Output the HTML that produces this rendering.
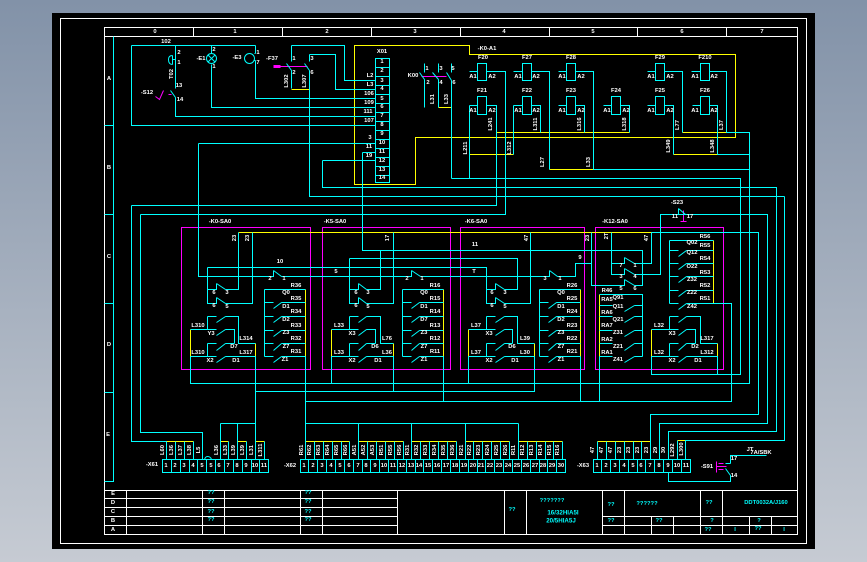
<!DOCTYPE html>
<html><head><meta charset="utf-8"><style>
html,body{margin:0;padding:0;width:867px;height:562px;overflow:hidden;background:linear-gradient(#8292a8,#c6cbd3)}
svg{position:absolute;left:0;top:0}
path,rect,circle{fill:none;stroke-width:1}
.w{stroke:#fff}.c{stroke:#0ff}.y{stroke:#ff0}.m{stroke:#f0f}
.l,.s{shape-rendering:crispEdges}
text{font-family:"Liberation Sans",sans-serif;font-weight:bold;font-size:5.8px;fill:#fff;text-anchor:middle;dominant-baseline:central}
.tc text{fill:#0ff}
</style></head><body>
<svg width="867" height="562" viewBox="0 0 867 562">
<rect x="52" y="13" width="763" height="536" fill="#000" style="fill:#000;stroke:none"/>
<g transform="translate(.5 .5)">
<path class="w s" d="M60 18H806V543H60ZM104 27H797V534H104ZM104 36H797M193 27V36M282 27V36M371 27V36M460 27V36M549 27V36M637 27V36M726 27V36"/>
<path class="w s" d="M104 490H797M104 498H397M104 507H397M104 516H397M104 525H397M126 490V534M202 490V534M224 490V534M300 490V534M322 490V534M397 490V534M504 490V534M526 490V534M602 490V534M624 490V534M700 490V534M722 490V534M602 516H797M602 525H797M651 516V534M673 516V534M749 516V534M771 516V534"/>
<path class="c s" d="M113 36V481H104M104 125H113M104 214H113M104 303H113M104 392H113"/>
<path class="m s" d="M181 227H310V369H181ZM322 227H450V369H322ZM460 227H584V369H460ZM595 227H723V369H595Z"/>
<path class="m s" d="M421 76H446M273 66H307M716 461V472M716 466H726M683 210V221M680 221H686M168 94H171"/>
<path class="m" d="M155 96L159 99L163 90M273 66h7" />
<path class="m s" d="M273 65h7M273 67h7M718 463h5M718 469h5"/>
<path class="y s" d="M354 45H469V54H735V137H415V184H354ZM291 89H309M438 107H451M496 132H629M682 132H726M469 154H513M673 154H717M549 169H593M238 232H651M190 329V356M255 343V356M331 329V356M393 343V356M468 329V356M534 343V356M651 329V356M717 343V356M305 289V356M443 289V356M580 289V356M599 294V356M713 240V303M166 441H193M220 441H228M237 441H246M255 441H264M305 441H349M358 441H403M411 441H456M465 441H509M518 441H562M597 441H650M677 440H685"/>
<path class="c s" d="M131 45H255M131 45V125H375M175 45V88M175 97V116H375M211 45V53M211 64V107H375M255 45V53M255 60V98H375M254 53h1M254 60h1M291 45H344V80H375M291 45V61M291 70V88M309 54H335V89H375M309 54V61M309 70V196H770M198 143H375M198 143V276H273V270M281 276H411V270M420 276H549V270M557 276H575V263H591M322 160H375M322 160V187H776V431H668V459M362 152H375M362 152V250H642V285H634M591 232V285H624V279M611 232V274H624V268M634 274H660V214H767V423H659V459M611 263H624V257M634 263H651V232M651 232H758V414H650V459M131 205V441H166M131 205H496V105H486M140 214H505V71H486M140 214V432H202V459M207 267H486V303H495V297M207 267V303H216V297M225 303H252V232M207 289H216V283M225 289H238V232M349 258H517V289H504M349 258V303H358V297M366 303H393V232M349 289H358V283M366 289H380V250M504 303H530V232M486 289H495V283"/>
<path class="c s" d="M207 316H216M225 316H238V343H255M207 316V329M190 329H216M225 329H234V343M207 343H216M225 343H234M207 343V356M190 356H216M225 356H255M190 356V383H749V132H726M255 356V459M255 391H534V356M349 316H358M366 316H380V343H393M349 316V329M331 329H358M366 329H375V343M349 343H358M366 343H375M349 343V356M331 356H358M366 356H393V391M331 356V383M486 316H495M504 316H517V343H534M486 316V329M468 329H495M504 329H512V343M486 343H495M504 343H512M486 343V356M468 356H495M504 356H534M468 356V383M669 316H678M686 316H700V343H717M669 316V329M651 329H678M686 329H695V343M669 343H678M686 343H695M669 343V356M651 356H678M686 356H717V374M651 356V374H740V178H451M717 154H749M593 169H749M678 214V208"/>
<path class="c s" d="M264 289V356M264 289H305M264 302H273M281 302H305M264 316H273M281 316H305M264 330H273M281 330H305M264 343H273M281 343H305M264 356H273M281 356H305M305 356V459M402 289V356M402 289H443M402 302H411M419 302H443M402 316H411M419 316H443M402 330H411M419 330H443M402 343H411M419 343H443M402 356H411M419 356H443M443 356V401M539 289V356M539 289H580M539 302H548M556 302H580M539 316H548M556 316H580M539 330H548M556 330H580M539 343H548M556 343H580M539 356H548M556 356H580M580 356V401M599 294H642V356M599 305H612M634 305H642M599 316H612M634 316H642M599 330H612M634 330H642M599 343H612M634 343H642M599 356H612M634 356H642M599 356V401M669 240H713M669 240V303M669 250H678M686 250H713M669 263H678M686 263H713M669 276H678M686 276H713M669 290H678M686 290H713M669 303H678M686 303H713M713 303H731V401H305"/>
<path class="c s" d="M469 71H477M513 71H522M531 71H549V169M558 71H566M575 71H593V169M647 71H655M664 71H682V132M691 71H700M709 71H726V132M469 105H477M513 105H522M531 105H540V132M558 105H566M575 105H584V132M603 105H611M620 105H629V132M647 105H655M664 105H673V154M692 105H700M709 105H717V154M469 105V178M513 105V154M424 63V72M424 79V107M438 63V72M438 79V107M451 63V72M451 80V178"/>
<path class="c s" d="M477 63h9v17h-9ZM522 63h9v17h-9ZM566 63h9v17h-9ZM655 63h9v17h-9ZM700 63h9v17h-9ZM477 96h9v18h-9ZM522 96h9v18h-9ZM566 96h9v18h-9ZM611 96h9v18h-9ZM655 96h9v18h-9ZM700 96h9v18h-9Z"/>
<path class="c" d="M170 90L175 97M286 63L291 70M304 63L309 70M419 72L424 79M432 72L438 79M446 72L451 80M273 270L281 276M411 270L420 276M549 270L557 276M624 257L634 263M624 268L634 274M624 279L634 285M216 283L225 289M216 297L225 303M358 283L366 289M358 297L366 303M495 283L504 289M495 297L504 303M678 208L685 214"/>
<path class="c" d="M216 322L225 316M216 335L225 329M216 350L225 343M216 362L225 356M358 322L366 316M358 335L366 329M358 350L366 343M358 362L366 356M495 322L504 316M495 335L504 329M495 350L504 343M495 362L504 356M678 322L686 316M678 335L686 329M678 350L686 343M678 362L686 356"/>
<path class="c" d="M273 308L281 302M273 322L281 316M273 336L281 330M273 350L281 343M273 362L281 356M411 308L419 302M411 322L419 316M411 336L419 330M411 350L419 343M411 362L419 356M548 308L556 302M548 322L556 316M548 336L556 330M548 350L556 343M548 362L556 356M624 311L634 305M624 322L634 316M624 336L634 330M624 350L634 343M624 362L634 356M678 256L686 250M678 269L686 263M678 282L686 276M678 296L686 290M678 309L686 303"/>
<circle class="c" cx="211" cy="58" r="5"/><path class="c" d="M207.5 54.5L214.5 61.5M214.5 54.5L207.5 61.5"/>
<circle class="c" cx="249" cy="58" r="5"/>
<path class="c" d="M172 55V64M172 55Q168 55 168 59Q168 64 172 64M172 59H175"/>
<path class="c s" d="M375 58H389V182H375ZM375 67H389M375 76H389M375 85H389M375 94H389M375 103H389M375 112H389M375 121H389M375 130H389M375 139H389M375 148H389M375 157H389M375 166H389M375 175H389"/>
<path class="c s" d="M162 459H268V472H162ZM171 459V472M180 459V472M189 459V472M197 459V472M206 459V472M215 459V472M224 459V472M233 459V472M242 459V472M251 459V472M259 459V472M166 441V459M175 441V459M184 441V459M193 441V459M220 423V459M228 441V459M237 423V459M246 441V459M264 441V459M220 423H255"/>
<path class="c" d="M204 459Q205 456 207 456Q210 456 211 459"/>
<path class="c s" d="M300 459H565V472H300ZM308 459V472M317 459V472M326 459V472M335 459V472M344 459V472M353 459V472M362 459V472M370 459V472M379 459V472M388 459V472M397 459V472M406 459V472M415 459V472M423 459V472M432 459V472M441 459V472M450 459V472M459 459V472M468 459V472M477 459V472M485 459V472M494 459V472M503 459V472M512 459V472M521 459V472M530 459V472M539 459V472M547 459V472M556 459V472"/>
<path class="c s" d="M305 423H518M305 401V459M314 441V459M323 441V459M332 441V459M341 441V459M349 441V459M358 423V459M367 441V459M376 441V459M385 441V459M394 441V459M403 441V459M411 423V459M420 441V459M429 441V459M438 441V459M447 441V459M456 441V459M465 423V459M473 441V459M482 441V459M491 441V459M500 441V459M509 441V459M518 423V459M527 441V459M536 441V459M545 441V459M553 441V459M562 441V459"/>
<path class="c s" d="M593 459H690V472H593ZM601 459V472M610 459V472M619 459V472M628 459V472M637 459V472M645 459V472M654 459V472M663 459V472M672 459V472M681 459V472M597 441V459M606 441V459M615 441V459M624 441V459M633 441V459M641 441V459M677 440V459M784 196V440H685V459M770 196H784M668 472V481H730V475M730 463V455H766"/>
<path class="c" d="M725 468L730 475M725 463L730 463"/>
</g>
<g>
<text x="155" y="32">0</text><text x="235" y="32">1</text><text x="327" y="32">2</text><text x="415" y="32">3</text><text x="504" y="32">4</text><text x="593" y="32">5</text><text x="682" y="32">6</text><text x="762" y="32">7</text>
<text x="109" y="79">A</text><text x="109" y="168">B</text><text x="109" y="257">C</text><text x="109" y="345">D</text><text x="108" y="435">E</text>
<text x="166" y="42">102</text><text x="179" y="53">2</text><text x="179" y="63">1</text><text transform="rotate(-90 172 74)" x="172" y="74">T02</text><text x="179" y="86">13</text><text x="180" y="100">14</text><text x="147" y="93">-S12</text>
<text x="214" y="50">2</text><text x="201" y="59">-E1</text><text x="214" y="67">1</text><text x="237" y="58">-E3</text><text x="258" y="53">1</text><text x="258" y="63">7</text><text x="272" y="59">-F37</text><text x="294" y="59">1</text><text x="294" y="73">2</text><text x="312" y="59">3</text><text x="312" y="73">6</text>
<text transform="rotate(-90 287 81)" x="287" y="81">L302</text><text transform="rotate(-90 305 81)" x="305" y="81">L307</text>
<text x="382" y="52">X01</text><text x="382" y="62">1</text><text x="382" y="71">2</text><text x="382" y="81">3</text><text x="382" y="89">4</text><text x="382" y="99">5</text><text x="382" y="107">6</text><text x="382" y="116">7</text><text x="382" y="125">8</text><text x="382" y="134">9</text><text x="382" y="143">10</text><text x="382" y="152">11</text><text x="382" y="161">12</text><text x="382" y="170">13</text><text x="382" y="178">14</text>
<text x="370" y="76">L2</text><text x="370" y="85">L3</text><text x="369" y="94">106</text><text x="369" y="103">109</text><text x="368" y="112">111</text><text x="369" y="121">107</text><text x="370" y="138">3</text><text x="369" y="147">11</text><text x="369" y="156">19</text>
<text x="413" y="76">K00</text><text x="427" y="69">1</text><text x="428" y="83">2</text><text x="441" y="69">3</text><text x="453" y="69">5</text><text x="441" y="83">4</text><text x="454" y="83">6</text>
<text transform="rotate(-90 433 99)" x="433" y="99">L31</text><text transform="rotate(-90 447 99)" x="447" y="99">L33</text>
<text x="487" y="49">-K0-A1</text>
<text x="483" y="58">F20</text><text x="527" y="58">F27</text><text x="571" y="58">F28</text><text x="660" y="58">F29</text><text x="705" y="58">F210</text>
<text x="482" y="91">F21</text><text x="527" y="91">F22</text><text x="571" y="91">F23</text><text x="616" y="91">F24</text><text x="660" y="91">F25</text><text x="705" y="91">F26</text>
<text x="473" y="77">A1</text><text x="492" y="77">A2</text><text x="518" y="77">A1</text><text x="536" y="77">A2</text><text x="562" y="77">A1</text><text x="581" y="77">A2</text><text x="651" y="77">A1</text><text x="670" y="77">A2</text><text x="695" y="77">A1</text><text x="714" y="77">A2</text>
<text x="473" y="111">A1</text><text x="492" y="111">A2</text><text x="518" y="111">A1</text><text x="536" y="111">A2</text><text x="562" y="111">A1</text><text x="581" y="111">A2</text><text x="607" y="111">A1</text><text x="626" y="111">A2</text><text x="651" y="111">A1</text><text x="670" y="111">A2</text><text x="695" y="111">A1</text><text x="714" y="111">A2</text>
<text transform="rotate(-90 491 124)" x="491" y="124">L241</text><text transform="rotate(-90 536 124)" x="536" y="124">L311</text><text transform="rotate(-90 580 124)" x="580" y="124">L316</text><text transform="rotate(-90 625 124)" x="625" y="124">L318</text><text transform="rotate(-90 678 125)" x="678" y="125">L77</text><text transform="rotate(-90 722 125)" x="722" y="125">L37</text><text transform="rotate(-90 466 148)" x="466" y="148">L211</text><text transform="rotate(-90 510 148)" x="510" y="148">L312</text><text transform="rotate(-90 669 146)" x="669" y="146">L349</text><text transform="rotate(-90 713 146)" x="713" y="146">L348</text><text transform="rotate(-90 543 162)" x="543" y="162">L27</text><text transform="rotate(-90 589 162)" x="589" y="162">L33</text>
<text x="220" y="222">-K0-SA0</text><text x="335" y="222">-K5-SA0</text><text x="476" y="222">-K6-SA0</text><text x="615" y="222">-K12-SA0</text><text x="677" y="203">-S23</text><text x="675" y="217">11</text><text x="690" y="217">17</text>
<text transform="rotate(-90 235 238)" x="235" y="238">23</text><text transform="rotate(-90 248 238)" x="248" y="238">23</text><text transform="rotate(-90 388 238)" x="388" y="238">17</text><text transform="rotate(-90 527 238)" x="527" y="238">47</text><text transform="rotate(-90 588 238)" x="588" y="238">23</text><text transform="rotate(-90 607 236)" x="607" y="236">2T</text><text transform="rotate(-90 647 238)" x="647" y="238">47</text>
<text x="280" y="262">10</text><text x="270" y="279">2</text><text x="284" y="279">1</text><text x="336" y="272">5</text><text x="407" y="279">2</text><text x="422" y="279">1</text><text x="475" y="245">11</text><text x="474" y="272">T</text><text x="545" y="279">3</text><text x="560" y="279">1</text><text x="580" y="258">9</text>
<text x="214" y="293">6</text><text x="227" y="293">3</text><text x="214" y="306">6</text><text x="227" y="307">5</text><text x="356" y="293">6</text><text x="368" y="293">3</text><text x="356" y="306">6</text><text x="368" y="307">5</text><text x="492" y="293">6</text><text x="505" y="293">3</text><text x="492" y="306">6</text><text x="505" y="307">5</text>
<text x="621" y="266">7</text><text x="635" y="266">1</text><text x="621" y="277">3</text><text x="635" y="277">4</text><text x="621" y="289">5</text><text x="635" y="289">6</text>
<text x="198" y="326">L310</text><text x="211" y="334">Y3</text><text x="234" y="347">D7</text><text x="246" y="339">L314</text><text x="198" y="353">L310</text><text x="246" y="353">L317</text><text x="210" y="361">X2</text><text x="236" y="361">D1</text>
<text x="339" y="326">L33</text><text x="352" y="334">X3</text><text x="375" y="347">D6</text><text x="387" y="339">L76</text><text x="339" y="353">L33</text><text x="387" y="353">L36</text><text x="352" y="361">X2</text><text x="378" y="361">D1</text>
<text x="476" y="326">L37</text><text x="489" y="334">X3</text><text x="512" y="347">D6</text><text x="525" y="339">L39</text><text x="476" y="353">L37</text><text x="525" y="353">L30</text><text x="489" y="361">X2</text><text x="515" y="361">D1</text>
<text x="659" y="326">L32</text><text x="672" y="334">X3</text><text x="695" y="347">D2</text><text x="707" y="339">L317</text><text x="659" y="353">L32</text><text x="707" y="353">L312</text><text x="672" y="361">X2</text><text x="698" y="361">D1</text>
<text x="296" y="286">R36</text><text x="286" y="293">Q0</text><text x="296" y="299">R35</text><text x="286" y="307">D1</text><text x="296" y="312">R34</text><text x="286" y="320">D2</text><text x="296" y="326">R33</text><text x="286" y="333">Z3</text><text x="296" y="339">R32</text><text x="286" y="347">Z7</text><text x="296" y="352">R31</text><text x="285" y="360">Z1</text>
<text x="435" y="286">R16</text><text x="424" y="293">Q0</text><text x="435" y="299">R15</text><text x="424" y="307">D1</text><text x="435" y="312">R14</text><text x="424" y="320">D7</text><text x="435" y="326">R13</text><text x="424" y="333">Z3</text><text x="435" y="339">R12</text><text x="424" y="347">Z7</text><text x="435" y="352">R11</text><text x="424" y="360">Z1</text>
<text x="572" y="286">R26</text><text x="561" y="293">Q0</text><text x="572" y="299">R25</text><text x="561" y="307">D1</text><text x="572" y="312">R24</text><text x="561" y="320">D2</text><text x="572" y="326">R23</text><text x="561" y="333">Z3</text><text x="572" y="339">R22</text><text x="561" y="347">Z7</text><text x="572" y="352">R21</text><text x="561" y="360">Z1</text>
<text x="607" y="291">R46</text><text x="607" y="300">RA5</text><text x="618" y="298">Q91</text><text x="618" y="307">Q11</text><text x="607" y="313">RA6</text><text x="618" y="320">Q21</text><text x="607" y="326">RA7</text><text x="618" y="333">Z31</text><text x="607" y="340">RA2</text><text x="618" y="347">Z21</text><text x="607" y="353">RA1</text><text x="618" y="360">Z41</text>
<text x="705" y="237">R56</text><text x="692" y="243">Q02</text><text x="705" y="246">R55</text><text x="692" y="253">Q12</text><text x="705" y="259">R54</text><text x="692" y="267">O22</text><text x="705" y="273">R53</text><text x="692" y="280">Z32</text><text x="705" y="286">R52</text><text x="692" y="293">Z22</text><text x="705" y="299">R51</text><text x="692" y="307">Z42</text>
<text x="152" y="465">-X61</text><text x="290" y="466">-X62</text><text x="583" y="466">-X63</text><text x="707" y="467">-S91</text><text x="734" y="459">17</text><text x="734" y="476">14</text><text x="750" y="450">JT</text><text x="761" y="453">7A/SBK</text>
<g style="font-size:5.5px">
<text x="166" y="466">1</text><text x="175" y="466">2</text><text x="184" y="466">3</text><text x="193" y="466">4</text><text x="202" y="466">5</text><text x="211" y="466">5</text><text x="219" y="466">6</text><text x="228" y="466">7</text><text x="237" y="466">8</text><text x="246" y="466">9</text><text x="255" y="466">10</text><text x="264" y="466">11</text>
<text x="304" y="466">1</text><text x="313" y="466">2</text><text x="322" y="466">3</text><text x="331" y="466">4</text><text x="340" y="466">5</text><text x="349" y="466">6</text><text x="358" y="466">7</text><text x="366" y="466">8</text><text x="375" y="466">9</text><text x="384" y="466">10</text><text x="393" y="466">11</text><text x="402" y="466">12</text><text x="411" y="466">13</text><text x="419" y="466">14</text><text x="428" y="466">15</text><text x="437" y="466">16</text><text x="446" y="466">17</text><text x="455" y="466">18</text><text x="464" y="466">19</text><text x="473" y="466">20</text><text x="481" y="466">21</text><text x="490" y="466">22</text><text x="499" y="466">23</text><text x="508" y="466">24</text><text x="517" y="466">25</text><text x="526" y="466">26</text><text x="535" y="466">27</text><text x="543" y="466">28</text><text x="552" y="466">29</text><text x="561" y="466">30</text>
<text x="597" y="466">1</text><text x="606" y="466">2</text><text x="615" y="466">3</text><text x="624" y="466">4</text><text x="633" y="466">5</text><text x="641" y="466">6</text><text x="650" y="466">7</text><text x="659" y="466">8</text><text x="668" y="466">9</text><text x="677" y="466">10</text><text x="686" y="466">11</text>
</g>
<text transform="rotate(-90 163 450)" x="163" y="450">L60</text><text transform="rotate(-90 172 450)" x="172" y="450">L36</text><text transform="rotate(-90 181 450)" x="181" y="450">L37</text><text transform="rotate(-90 190 450)" x="190" y="450">L38</text><text transform="rotate(-90 199 450)" x="199" y="450">L5</text><text transform="rotate(-90 217 450)" x="217" y="450">L36</text><text transform="rotate(-90 226 450)" x="226" y="450">L33</text><text transform="rotate(-90 234 450)" x="234" y="450">L39</text><text transform="rotate(-90 243 450)" x="243" y="450">L39</text><text transform="rotate(-90 252 450)" x="252" y="450">L31</text><text transform="rotate(-90 261 450)" x="261" y="450">L311</text>
<text transform="rotate(-90 302 450)" x="302" y="450">R61</text><text transform="rotate(-90 310 450)" x="310" y="450">R62</text><text transform="rotate(-90 319 450)" x="319" y="450">R63</text><text transform="rotate(-90 328 450)" x="328" y="450">R64</text><text transform="rotate(-90 337 450)" x="337" y="450">R65</text><text transform="rotate(-90 346 450)" x="346" y="450">R66</text><text transform="rotate(-90 355 450)" x="355" y="450">A51</text><text transform="rotate(-90 364 450)" x="364" y="450">A52</text><text transform="rotate(-90 373 450)" x="373" y="450">A53</text><text transform="rotate(-90 382 450)" x="382" y="450">R51</text><text transform="rotate(-90 391 450)" x="391" y="450">R55</text><text transform="rotate(-90 400 450)" x="400" y="450">R56</text><text transform="rotate(-90 408 450)" x="408" y="450">R31</text><text transform="rotate(-90 417 450)" x="417" y="450">R32</text><text transform="rotate(-90 426 450)" x="426" y="450">R33</text><text transform="rotate(-90 435 450)" x="435" y="450">R34</text><text transform="rotate(-90 444 450)" x="444" y="450">R35</text><text transform="rotate(-90 453 450)" x="453" y="450">R36</text><text transform="rotate(-90 462 450)" x="462" y="450">R21</text><text transform="rotate(-90 470 450)" x="470" y="450">R22</text><text transform="rotate(-90 479 450)" x="479" y="450">R23</text><text transform="rotate(-90 488 450)" x="488" y="450">R24</text><text transform="rotate(-90 497 450)" x="497" y="450">R25</text><text transform="rotate(-90 506 450)" x="506" y="450">R26</text><text transform="rotate(-90 514 450)" x="514" y="450">R11</text><text transform="rotate(-90 523 450)" x="523" y="450">R12</text><text transform="rotate(-90 532 450)" x="532" y="450">R13</text><text transform="rotate(-90 541 450)" x="541" y="450">R14</text><text transform="rotate(-90 550 450)" x="550" y="450">R15</text><text transform="rotate(-90 558 450)" x="558" y="450">R16</text>
<text transform="rotate(-90 593 450)" x="593" y="450">47</text><text transform="rotate(-90 602 450)" x="602" y="450">47</text><text transform="rotate(-90 611 450)" x="611" y="450">47</text><text transform="rotate(-90 620 450)" x="620" y="450">23</text><text transform="rotate(-90 629 450)" x="629" y="450">23</text><text transform="rotate(-90 638 450)" x="638" y="450">23</text><text transform="rotate(-90 647 450)" x="647" y="450">23</text><text transform="rotate(-90 656 450)" x="656" y="450">29</text><text transform="rotate(-90 664 450)" x="664" y="450">30</text><text transform="rotate(-90 673 450)" x="673" y="450">L292</text><text transform="rotate(-90 682 449)" x="682" y="449">L300</text>
<text x="113" y="494">E</text><text x="113" y="503">D</text><text x="113" y="512">C</text><text x="113" y="521">B</text><text x="113" y="530">A</text>
</g>
<g class="tc">
<text x="211" y="493">??</text><text x="211" y="502">??</text><text x="211" y="512">??</text><text x="211" y="520">??</text><text x="308" y="493">??</text><text x="308" y="502">??</text><text x="308" y="512">??</text><text x="308" y="520">??</text>
<text x="512" y="510">??</text><text x="552" y="501">???????</text><text x="563" y="513" style="font-size:6.2px">16/32HIA5I</text><text x="561" y="521" style="font-size:6.2px">20/5HIA5J</text><text x="611" y="505">??</text><text x="647" y="504">??????</text><text x="709" y="503">??</text><text x="766" y="503">DDT0032A/J160</text>
<text x="611" y="521">??</text><text x="659" y="521">??</text><text x="712" y="521">?</text><text x="759" y="521">?</text><text x="708" y="530">??</text><text x="735" y="530">I</text><text x="758" y="529">??</text><text x="784" y="530">I</text>
</g>
</svg>
</body></html>
